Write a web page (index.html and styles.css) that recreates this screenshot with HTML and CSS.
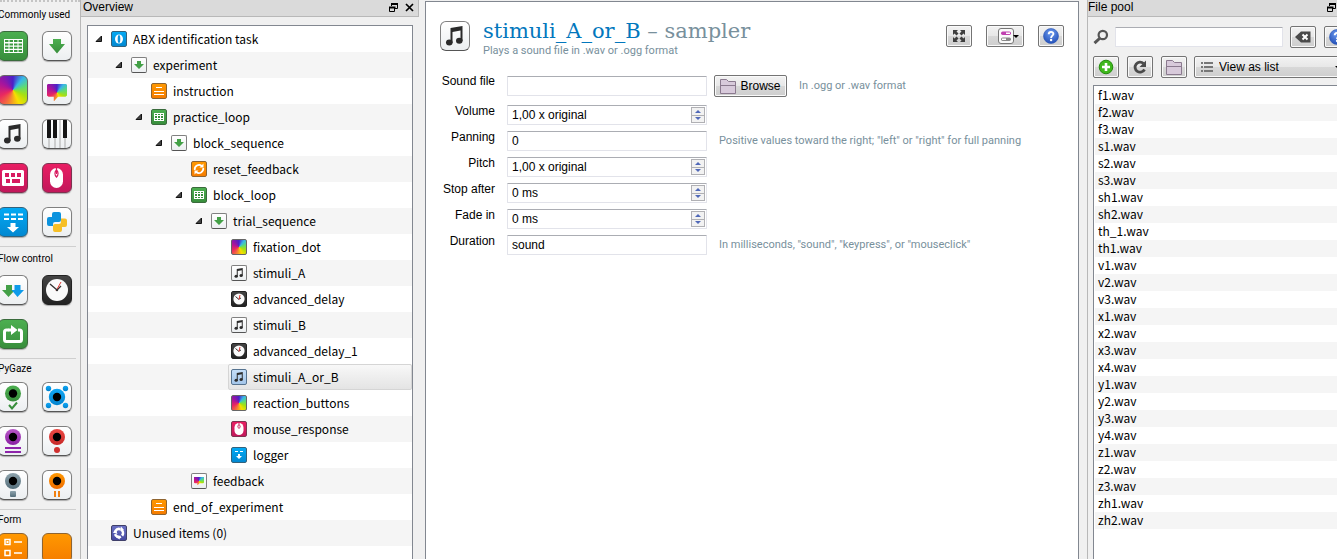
FILE: index.html
```html
<!DOCTYPE html>
<html lang="en">
<head>
<meta charset="utf-8">
<title>ABX identification task</title>
<link rel="stylesheet" href="styles.css">
</head>
<body>
<svg class="defs" aria-hidden="true">
  <defs>
    <linearGradient id="gGreen" x1="0" y1="0" x2="0" y2="1"><stop offset="0" stop-color="#4caf50"/><stop offset="1" stop-color="#388e3c"/></linearGradient>
    <linearGradient id="gBlue" x1="0" y1="0" x2="0" y2="1"><stop offset="0" stop-color="#12a8f5"/><stop offset="1" stop-color="#0283cf"/></linearGradient>
    <linearGradient id="gPurple" x1="0" y1="0" x2="0" y2="1"><stop offset="0" stop-color="#b858c8"/><stop offset="1" stop-color="#8a1fa4"/></linearGradient>
    <linearGradient id="gRed" x1="0" y1="0" x2="0" y2="1"><stop offset="0" stop-color="#ee4a45"/><stop offset="1" stop-color="#c62828"/></linearGradient>
    <linearGradient id="gSlate" x1="0" y1="0" x2="0" y2="1"><stop offset="0" stop-color="#8ea3ad"/><stop offset="1" stop-color="#546e7a"/></linearGradient>
    <linearGradient id="gOrange" x1="0" y1="0" x2="0" y2="1"><stop offset="0" stop-color="#ff9800"/><stop offset="1" stop-color="#ee6c00"/></linearGradient>
    <radialGradient id="gHelp" cx=".5" cy=".3" r=".7"><stop offset="0" stop-color="#6d9cf0"/><stop offset="1" stop-color="#2450b8"/></radialGradient>

    <symbol id="table" viewBox="0 0 28 28"><path fill="#fff" d="M5 7h19v14H5z"/><path stroke="#3c9a41" stroke-width="2" stroke-dasharray="3.5 1" d="M6 9h17M6 12.4h17M6 15.8h17M6 19h17"/></symbol>
    <symbol id="tableS" viewBox="0 0 14 14"><path fill="#fff" d="M2 3h10v8H2z"/><path fill="#388e3c" d="M3 4h2v1H3zM6 4h2v1H6zM9 4h2v1H9zM3 6h2v2H3zM6 6h2v2H6zM9 6h2v2H9zM3 9h2v1H3zM6 9h2v1H6zM9 9h2v1H9z"/></symbol>
    <symbol id="down" viewBox="0 0 28 28"><path fill="url(#gGreen)" d="M10 7h8v5h4l-8 9.500-8-9.500h4z"/></symbol>
    <symbol id="downS" viewBox="0 0 14 14"><path fill="#43a047" d="M5 3h4v3h3L7 11 2 6h3z"/></symbol>
    <symbol id="note" viewBox="0 0 28 28"><path fill="#2b2b2b" d="M9.500 6 21.500 4v15h-2V8.500L11.500 10v11h-2z"/><ellipse cx="8.300" cy="20.500" rx="3.300" ry="3" fill="#2b2b2b"/><ellipse cx="18.300" cy="18.800" rx="3.300" ry="3" fill="#2b2b2b"/></symbol>
    <symbol id="piano" viewBox="0 0 28 28"><path stroke="#aaa" d="M6 17v11M12 17v11M17 0v28M22 17v11"/><path fill="#151515" d="M4 0h4v18H4zM10 0h4v18h-4zM20 0h4v18h-4z"/></symbol>
    <symbol id="keyb" viewBox="0 0 28 28"><rect x="3" y="6" width="22" height="16" rx="1.500" fill="#fff"/><path fill="#d81b60" d="M6 9h4v4H6zM12 9h4v4h-4zM18 9h4v4h-4zM7 15h4v4H7zM13 15h8v4h-8z"/></symbol>
    <symbol id="mouse" viewBox="0 0 28 28"><rect x="7" y="4" width="13" height="20" rx="6.500" fill="#fff"/><path fill="none" stroke="#d81b60" stroke-width="1.300" d="M13.500 3v3m0 0c-2 2-2 5 0 7 2-2 2-5 0-7v4"/></symbol>
    <symbol id="mouseS" viewBox="0 0 14 14"><rect x="2.500" y="1" width="9" height="12" rx="4.500" fill="#fff"/><path fill="none" stroke="#c81858" d="M7 1v1.500m0 0C5.500 3.500 5.500 5 7 6.500 8.500 5 8.500 3.500 7 2.500"/></symbol>
    <symbol id="log" viewBox="0 0 28 28"><path stroke="#fff" stroke-width="2" stroke-dasharray="5 2" d="M5 6.500h19M5 11h19"/><path fill="#fff" d="M11.500 15h5v4H20l-6 5.500L8 19h3.500z"/></symbol>
    <symbol id="logS" viewBox="0 0 14 14"><path fill="#fff" d="M3 3h3v1H3zM8 3h3v1H8zM6 6h2v2h2l-3 3-3-3h2z"/></symbol>
    <symbol id="python" viewBox="0 0 28 28"><path fill="#0c93de" d="M11 4h5q2 0 2 2v6q0 2-2 2h-4q-2 0-2 2v2H6q-2 0-2-2v-5q0-2 2-2h3V6q0-2 2-2z"/><path fill="#f6bf26" d="M18 10.500h4q2 0 2 2V17q0 2-2 2h-3v3q0 2-2 2h-5q-2 0-2-2v-4q0-2 2-2h4q2 0 2-2z"/></symbol>
    <symbol id="twin" viewBox="0 0 28 28"><path fill="#43a047" d="M7 9h6v5h3l-6.500 7L3 14h4z"/><path fill="#0d9bea" d="M15.500 9h6v5H25l-6.500 7-6-7h3z"/></symbol>
    <symbol id="clock" viewBox="0 0 28 28"><circle cx="14" cy="14" r="11" fill="#fafafa"/><path stroke="#333" stroke-width="1.300" d="m14 14-7-6M14 14l4-4"/><path stroke="#e53935" d="m13 15 5-9"/><circle cx="14" cy="14" r="1.200" fill="#333"/></symbol>
    <symbol id="clockS" viewBox="0 0 14 14"><circle cx="7" cy="7" r="5.600" fill="#fafafa"/><path stroke="#333" d="m7 7.500-3.500-3M7 7l2-1"/><path stroke="#e53935" d="M7 7.500 8 3"/></symbol>
    <symbol id="repeat" viewBox="0 0 28 28"><path fill="none" stroke="#fff" stroke-width="3" d="M9.500 10H7.500Q5.500 10 5.500 12v7.500q0 2 2 2h13q2 0 2-2V12q0-2-2-2H19"/><path fill="#fff" d="M9 8.500h3V5l6.500 5-6.500 5v-3.500H9z"/></symbol>
    <symbol id="eyeGreen" viewBox="0 0 28 28"><circle cx="14" cy="10.500" r="8" fill="url(#gGreen)"/><circle cx="14" cy="10.500" r="4.200"/><path fill="none" stroke="#388e3c" stroke-width="2" d="m10 22 3 3.500 5-6"/></symbol>
    <symbol id="eyeBlue" viewBox="0 0 28 28"><g fill="url(#gBlue)"><circle cx="14" cy="14" r="8.200"/><circle cx="5.500" cy="5.500" r="2.700"/><circle cx="22.500" cy="5.500" r="2.700"/><circle cx="5.500" cy="22.500" r="2.700"/><circle cx="22.500" cy="22.500" r="2.700"/></g><circle cx="14" cy="14" r="4.200"/></symbol>
    <symbol id="eyePurple" viewBox="0 0 28 28"><circle cx="14" cy="10" r="8" fill="url(#gPurple)"/><circle cx="14" cy="10" r="4.200"/><path stroke="#8e24aa" stroke-width="2" d="M6 21h16M6 25h16"/></symbol>
    <symbol id="eyeRed" viewBox="0 0 28 28"><circle cx="14" cy="10" r="8" fill="url(#gRed)"/><circle cx="14" cy="10" r="4.200"/><circle cx="14" cy="23" r="3" fill="#cf302f"/></symbol>
    <symbol id="eyeSlate" viewBox="0 0 28 28"><circle cx="14" cy="10" r="8" fill="url(#gSlate)"/><circle cx="14" cy="10" r="4.200"/><rect x="11" y="20" width="6" height="6" rx="1" fill="url(#gSlate)"/></symbol>
    <symbol id="eyeOrange" viewBox="0 0 28 28"><circle cx="14" cy="10" r="8" fill="url(#gOrange)"/><circle cx="14" cy="10" r="4.200"/><path fill="#f08010" d="M11 20h2v6h-2zM15 20h2v6h-2z"/></symbol>
    <symbol id="formList" viewBox="0 0 28 28"><path fill="none" stroke="#fff" stroke-width="1.500" d="M6 5.500h5v5H6zM15 8h8M6 16.500h5v5H6zM15 19h8"/><path fill="#fff" d="M7.500 7h2v2h-2z"/></symbol>
    <symbol id="lines" viewBox="0 0 14 14"><path fill="#fff" d="M4 3h6v1H4zM2 7h10v1H2zM2 10h10v1H2z"/></symbol>
    <symbol id="reset" viewBox="0 0 14 14"><path fill="none" stroke="#fff" stroke-width="1.800" d="M2.800 8a4.300 4.300 0 0 1 7-4M11.200 6a4.300 4.300 0 0 1-7 4"/><path fill="#fff" d="M11.500 1.500v4h-4zM2.500 12.500v-4h4z"/></symbol>
    <symbol id="zero" viewBox="0 0 14 14"><ellipse cx="7" cy="7" rx="4" ry="4.600" fill="#fff"/><ellipse cx="7" cy="7" rx="1.300" ry="4" fill="#0d93dc"/></symbol>
    <symbol id="recycle" viewBox="0 0 14 14"><circle cx="7" cy="7" r="4" fill="none" stroke="#fff" stroke-width="2.600" stroke-dasharray="6.900 1.477" transform="rotate(-60 7 7)"/><path fill="#fff" d="m9 .5 3 3.500-4 .5zM.8 6.500 4 4l1.500 4zM7 9.500l1 4-4-2z"/></symbol>

    <symbol id="arrow" viewBox="0 0 8 8"><path fill="#444" stroke="#111" d="M6.500 1v5.500H1z"/></symbol>
    <symbol id="restore" viewBox="0 0 9 9"><path fill="none" stroke="#000" d="M2.500 3V.5h6v5H6"/><path stroke="#000" stroke-width="2" d="M2 1h7M0 4.500h6.500"/><path fill="none" stroke="#000" d="M.5 4v4.500h5V4"/></symbol>
    <symbol id="close" viewBox="0 0 9 9"><path stroke="#000" stroke-width="1.700" d="m1 1 7 7M8 1 1 8"/></symbol>
    <symbol id="folder" viewBox="0 0 16 16"><path fill="#d8cadb" stroke="#8b7a8f" d="M.5 15.500V1.500h6l2 2h7v12zM.5 7.500h15"/></symbol>
    <symbol id="expand" viewBox="0 0 16 16"><path fill="#3f3f3f" d="M2 2h5L5.500 3.500l2 2-2 2-2-2L2 7zM14 2v5l-1.500-1.500-2 2-2-2 2-2L9 2zM2 14V9l1.500 1.500 2-2 2 2-2 2L7 14zM14 14H9l1.500-1.500-2-2 2-2 2 2L14 9z"/></symbol>
    <symbol id="toggles" viewBox="0 0 16 16"><rect x=".5" y=".5" width="15" height="15" rx="2.500" fill="#fafafa" stroke="#777"/><rect x="3" y="3.500" width="10" height="3.500" rx="1.700" fill="#c040b0"/><rect x="8" y="4.500" width="4" height="1.500" fill="#fff"/><rect x="3" y="9.500" width="10" height="3.500" rx="1.700" fill="#888"/><rect x="4" y="10.500" width="4" height="1.500" fill="#fff"/></symbol>
    <symbol id="help" viewBox="0 0 16 16"><circle cx="8" cy="8" r="7.500" fill="url(#gHelp)" stroke="#2a55b5" stroke-width=".6"/><path fill="none" stroke="#fff" stroke-width="1.900" d="M5.700 6.300C5.700 3 10.500 3.200 10.400 6 10.300 7.600 8.100 7.800 8.100 10"/><circle cx="8.100" cy="12" r="1.200" fill="#fff"/></symbol>
    <symbol id="search" viewBox="0 0 16 16"><circle cx="9.800" cy="6" r="4.200" fill="none" stroke="#555" stroke-width="2.200"/><path stroke="#555" stroke-width="3" d="m6.500 9.500-5 4.700"/></symbol>
    <symbol id="erase" viewBox="0 0 16 16"><path fill="#4a4a4a" d="m0 8 6-5.500h9.500v11H6z"/><path stroke="#fff" stroke-width="2" d="m7.500 5.500 5 5M12.500 5.500l-5 5"/></symbol>
    <symbol id="plus" viewBox="0 0 16 16"><circle cx="8" cy="8" r="6.800" fill="#3fb81c" stroke="#238a0c"/><path stroke="#fff" stroke-width="2.600" d="M8 4v8M4 8h8"/></symbol>
    <symbol id="refresh" viewBox="0 0 16 16"><path fill="none" stroke="#4a4a4a" stroke-width="2.800" d="M12.500 10.500a5 5 0 1 1-1-6"/><path fill="#4a4a4a" d="M14 1.500V8H7.500z"/></symbol>
    <symbol id="list" viewBox="0 0 12 12"><path stroke="#777" stroke-width="2" d="M0 2h2M0 6h2M0 10h2M3 2h9M3 6h9M3 10h9"/></symbol>
  </defs>
</svg>

<div class="app">
  <aside class="toolbox">
    <section class="group">
      <h2>Commonly used</h2>
      <div class="tools">
        <button class="tile green" aria-label="loop"><svg><use href="#table"/></svg></button>
        <button class="tile" aria-label="sequence"><svg><use href="#down"/></svg></button>
        <button class="tile rainbow" aria-label="sketchpad"></button>
        <button class="tile" aria-label="feedback"><span class="bubble"></span></button>
        <button class="tile" aria-label="sampler"><svg><use href="#note"/></svg></button>
        <button class="tile" aria-label="synth"><svg><use href="#piano"/></svg></button>
        <button class="tile pink" aria-label="keyboard_response"><svg><use href="#keyb"/></svg></button>
        <button class="tile pink" aria-label="mouse_response"><svg><use href="#mouse"/></svg></button>
        <button class="tile blue" aria-label="logger"><svg><use href="#log"/></svg></button>
        <button class="tile" aria-label="inline_script"><svg><use href="#python"/></svg></button>
      </div>
    </section>
    <section class="group flow">
      <h2>Flow control</h2>
      <div class="tools">
        <button class="tile" aria-label="coroutines"><svg><use href="#twin"/></svg></button>
        <button class="tile dark" aria-label="advanced_delay"><svg><use href="#clock"/></svg></button>
        <button class="tile green" aria-label="repeat_cycle"><svg><use href="#repeat"/></svg></button>
      </div>
    </section>
    <section class="group">
      <h2>PyGaze</h2>
      <div class="tools">
        <button class="tile" aria-label="pygaze_init"><svg><use href="#eyeGreen"/></svg></button>
        <button class="tile" aria-label="pygaze_drift_correct"><svg><use href="#eyeBlue"/></svg></button>
        <button class="tile" aria-label="pygaze_log"><svg><use href="#eyePurple"/></svg></button>
        <button class="tile" aria-label="pygaze_start_recording"><svg><use href="#eyeRed"/></svg></button>
        <button class="tile" aria-label="pygaze_stop_recording"><svg><use href="#eyeSlate"/></svg></button>
        <button class="tile" aria-label="pygaze_wait"><svg><use href="#eyeOrange"/></svg></button>
      </div>
    </section>
    <section class="group">
      <h2>Form</h2>
      <div class="tools">
        <button class="tile orange" aria-label="form_multiple_choice"><svg><use href="#formList"/></svg></button>
        <button class="tile orange" aria-label="form_base"></button>
      </div>
    </section>
  </aside>

  <section class="dock overview">
    <header class="dock-head"><h2>Overview</h2>
      <button aria-label="Float overview"><svg><use href="#restore"/></svg></button>
      <button aria-label="Close overview"><svg><use href="#close"/></svg></button>
    </header>
    <div class="dock-body">
      <ul class="tree">
        <li class="d0"><svg class="arrow"><use href="#arrow"/></svg><span class="tile blue"><svg><use href="#zero"/></svg></span>ABX identification task</li>
        <li class="d1"><svg class="arrow"><use href="#arrow"/></svg><span class="tile"><svg><use href="#downS"/></svg></span>experiment</li>
        <li class="d2"><span class="arrow"></span><span class="tile orange"><svg><use href="#lines"/></svg></span>instruction</li>
        <li class="d2"><svg class="arrow"><use href="#arrow"/></svg><span class="tile green"><svg><use href="#tableS"/></svg></span>practice_loop</li>
        <li class="d3"><svg class="arrow"><use href="#arrow"/></svg><span class="tile"><svg><use href="#downS"/></svg></span>block_sequence</li>
        <li class="d4"><span class="arrow"></span><span class="tile orange"><svg><use href="#reset"/></svg></span>reset_feedback</li>
        <li class="d4"><svg class="arrow"><use href="#arrow"/></svg><span class="tile green"><svg><use href="#tableS"/></svg></span>block_loop</li>
        <li class="d5"><svg class="arrow"><use href="#arrow"/></svg><span class="tile"><svg><use href="#downS"/></svg></span>trial_sequence</li>
        <li class="d6"><span class="arrow"></span><span class="tile rainbow"></span>fixation_dot</li>
        <li class="d6"><span class="arrow"></span><span class="tile"><svg><use href="#note"/></svg></span>stimuli_A</li>
        <li class="d6"><span class="arrow"></span><span class="tile dark"><svg><use href="#clockS"/></svg></span>advanced_delay</li>
        <li class="d6"><span class="arrow"></span><span class="tile"><svg><use href="#note"/></svg></span>stimuli_B</li>
        <li class="d6"><span class="arrow"></span><span class="tile dark"><svg><use href="#clockS"/></svg></span>advanced_delay_1</li>
        <li class="d6"><span class="arrow"></span><span class="current"><span class="tile picked"><svg><use href="#note"/></svg></span>stimuli_A_or_B</span></li>
        <li class="d6"><span class="arrow"></span><span class="tile rainbow"></span>reaction_buttons</li>
        <li class="d6"><span class="arrow"></span><span class="tile pink"><svg><use href="#mouseS"/></svg></span>mouse_response</li>
        <li class="d6"><span class="arrow"></span><span class="tile blue"><svg><use href="#logS"/></svg></span>logger</li>
        <li class="d4"><span class="arrow"></span><span class="tile"><span class="bubble"></span></span>feedback</li>
        <li class="d2"><span class="arrow"></span><span class="tile orange"><svg><use href="#lines"/></svg></span>end_of_experiment</li>
        <li class="d0"><span class="arrow"></span><span class="tile indigo"><svg><use href="#recycle"/></svg></span>Unused items (0)</li>
      </ul>
    </div>
  </section>

  <main class="editor">
    <header class="item-head">
      <span class="tile"><svg><use href="#note"/></svg></span>
      <div class="item-title">
        <h1><b>stimuli_A_or_B</b> – sampler</h1>
        <p>Plays a sound file in .wav or .ogg format</p>
      </div>
      <div class="item-actions">
        <button class="btn" aria-label="Maximize"><svg><use href="#expand"/></svg></button>
        <button class="btn wide" aria-label="View controls"><svg><use href="#toggles"/></svg><i class="caret"></i></button>
        <button class="btn" aria-label="Help"><svg><use href="#help"/></svg></button>
      </div>
    </header>
    <form class="fields">
      <label for="file">Sound file</label>
      <div class="field first"><input class="box" id="file" type="text"><button class="btn browse" type="button"><svg><use href="#folder"/></svg>Browse</button><span class="hint">In .ogg or .wav format</span></div>
      <label for="volume">Volume</label>
      <div class="field"><div class="box spin"><input id="volume" type="text" value="1,00 x original"><span class="steps"><button type="button" class="up" aria-label="Increase volume"></button><button type="button" class="dn" aria-label="Decrease volume"></button></span></div></div>
      <label for="panning">Panning</label>
      <div class="field"><input class="box" id="panning" type="text" value="0"><span class="hint">Positive values toward the right; "left" or "right" for full panning</span></div>
      <label for="pitch">Pitch</label>
      <div class="field"><div class="box spin"><input id="pitch" type="text" value="1,00 x original"><span class="steps"><button type="button" class="up" aria-label="Increase pitch"></button><button type="button" class="dn" aria-label="Decrease pitch"></button></span></div></div>
      <label for="stop">Stop after</label>
      <div class="field"><div class="box spin"><input id="stop" type="text" value="0 ms"><span class="steps"><button type="button" class="up" aria-label="Increase stop after"></button><button type="button" class="dn" aria-label="Decrease stop after"></button></span></div></div>
      <label for="fade">Fade in</label>
      <div class="field"><div class="box spin"><input id="fade" type="text" value="0 ms"><span class="steps"><button type="button" class="up" aria-label="Increase fade in"></button><button type="button" class="dn" aria-label="Decrease fade in"></button></span></div></div>
      <label for="duration">Duration</label>
      <div class="field"><input class="box" id="duration" type="text" value="sound"><span class="hint">In milliseconds, "sound", "keypress", or "mouseclick"</span></div>
    </form>
  </main>

  <section class="dock pool">
    <header class="dock-head"><h2>File pool</h2>
      <button aria-label="Float file pool"><svg><use href="#restore"/></svg></button>
      <button aria-label="Close file pool"><svg><use href="#close"/></svg></button>
    </header>
    <div class="dock-body">
      <div class="bar">
        <label class="find" for="find" aria-label="Search files"><svg><use href="#search"/></svg></label>
        <input class="box" id="find" type="text">
        <button class="btn" aria-label="Clear search"><svg><use href="#erase"/></svg></button>
        <button class="btn" aria-label="File pool help"><svg><use href="#help"/></svg></button>
      </div>
      <div class="bar">
        <button class="btn" aria-label="Add file"><svg><use href="#plus"/></svg></button>
        <button class="btn" aria-label="Refresh"><svg><use href="#refresh"/></svg></button>
        <button class="btn" aria-label="Open folder"><svg><use href="#folder"/></svg></button>
        <div class="btn combo"><svg><use href="#list"/></svg><select aria-label="View mode"><option>View as list</option><option>View as icons</option></select><i class="caret"></i></div>
      </div>
      <ul class="files">
        <li>f1.wav</li><li>f2.wav</li><li>f3.wav</li>
        <li>s1.wav</li><li>s2.wav</li><li>s3.wav</li>
        <li>sh1.wav</li><li>sh2.wav</li>
        <li>th_1.wav</li><li>th1.wav</li>
        <li>v1.wav</li><li>v2.wav</li><li>v3.wav</li>
        <li>x1.wav</li><li>x2.wav</li><li>x3.wav</li><li>x4.wav</li>
        <li>y1.wav</li><li>y2.wav</li><li>y3.wav</li><li>y4.wav</li>
        <li>z1.wav</li><li>z2.wav</li><li>z3.wav</li>
        <li>zh1.wav</li><li>zh2.wav</li>
      </ul>
    </div>
  </section>
</div>
</body>
</html>
```
FILE: styles.css
```css
* { box-sizing: border-box; margin: 0; padding: 0; }
body {
  background: #f0f0f0;
  color: #000;
  font: 12px/16px "Liberation Sans", sans-serif;
  overflow: hidden;
}
button, input, select { font: inherit; color: inherit; border: 0; background: none; }
ul { list-style: none; }
svg { display: block; }
.defs { position: absolute; width: 0; height: 0; }

.app {
  display: grid;
  grid-template-columns: 80px 339px 1fr 250px;
  height: 100vh;
}
.app > * { min-width: 0; overflow: hidden; }

/* Item toolbox */
.toolbox { border-top: 2px dotted #c4c4c4; }
.group { padding-bottom: 9px; margin-right: 4px; }
.group + .group { border-top: 1px solid #cfcfcf; }
.group h2 {
  font: 10px/16px Roboto, sans-serif;
  margin-left: -2px;
  padding: 2px 0 5px;
  white-space: nowrap;
}
.group:first-child h2 { padding: 5px 0 8px; }
.flow h2 { padding: 4px 0 8px; }
.tools {
  display: grid;
  grid-template-columns: 30px 30px;
  gap: 14px;
  margin-left: -2px;
}
.tile {
  display: block;
  flex: none;
  width: 30px;
  height: 30px;
  border: 1px solid #808080;
  border-bottom-color: #555;
  border-radius: 6px;
  background: linear-gradient(#fff, #eceff1);
  overflow: hidden;
}
.tools .tile { box-shadow: 0 1px 1px #aaa; }
.tile svg { width: 100%; height: 100%; }
.green { background: linear-gradient(#4caf50, #388e3c); border-color: #3a6b3c; }
.blue { background: linear-gradient(#03a9f4, #0288d1); border-color: #33627c; }
.pink { background: linear-gradient(#e91e63, #c2185b); border-color: #7d3350; }
.orange { background: linear-gradient(#ff9800, #f57c00); border-color: #8f6430; }
.dark { background: linear-gradient(#444, #222); border-color: #222; }
.indigo { background: linear-gradient(#6a70c4, #4548a0); border-color: #40406a; }
.picked { background: linear-gradient(#c4def8, #a4c6ea); border-color: #567390; }
.rainbow, .bubble {
  background: conic-gradient(#4a20c8, #38b8e8 40deg, #60dc70 75deg, #a8e010 115deg, #f8e000 155deg, #f4703c 205deg, #ea2860 245deg, #a8149c 300deg, #4a20c8);
}
.rainbow { border-color: #666; }
.bubble {
  display: block;
  width: 72%;
  height: 64%;
  margin: 18% auto 0;
  clip-path: polygon(0 8%, 8% 0, 92% 0, 100% 8%, 100% 66%, 92% 74%, 55% 74%, 34% 100%, 34% 74%, 8% 74%, 0 66%);
}

/* Dock panels */
.dock {
  display: flex;
  flex-direction: column;
  border-left: 1px solid #b8b8b8;
}
.dock-head {
  display: flex;
  align-items: center;
  flex: none;
  height: 17px;
  padding: 0 4px 2px 2px;
  background: #dadada;
  border-bottom: 1px solid #b8b8b8;
}
.overview .dock-head { border-right: 1px solid #b8b8b8; }
.dock-head h2 { flex: 1; font: 12px/14px "Liberation Sans", sans-serif; }
.dock-head button { margin-left: 7px; }
.dock-head svg { width: 9px; height: 9px; }
.dock-body { display: flex; flex-direction: column; flex: 1; padding: 8px 6px 0; }
.tree, .files {
  flex: 1;
  background: #fff;
  border: 1px solid #828790;
  border-bottom: 0;
  font: 12px/16px "Noto Sans CJK KR", "Noto Sans", sans-serif;
  white-space: nowrap;
}
.tree li { display: flex; align-items: center; height: 26px; }
.tree li:nth-child(even), .files li:nth-child(even) { background: #f5f5f5; }
.tree .tile { width: 16px; height: 16px; border-radius: 2px; margin-right: 6px; }
.arrow { flex: none; width: 8px; height: 8px; margin: 0 8px 0 7px; }
.d1 { padding-left: 20px; }
.d2 { padding-left: 40px; }
.d3 { padding-left: 60px; }
.d4 { padding-left: 80px; }
.d5 { padding-left: 100px; }
.d6 { padding-left: 120px; }
.current {
  display: flex;
  align-items: center;
  flex: 1;
  height: 26px;
  margin-left: -3px;
  padding-left: 2px;
  border: 1px solid #d5d5d5;
  border-radius: 2px;
  background: linear-gradient(#f8f8f8, #e4e4e4);
}

/* Item editor */
.editor {
  margin: 1px 8px 0 6px;
  padding: 18px 14px 0;
  background: #fff;
  border: 1px solid #828790;
  border-bottom: 0;
}
.item-head { display: flex; align-items: flex-start; height: 55px; }
.item-head > .tile { margin: 1px 13px 0 0; }
.item-title { flex: 1; white-space: nowrap; }
.item-title h1 { font: 21px/22px "DejaVu Serif", serif; color: #78909c; }
.item-title b { font-weight: 400; color: #0277bd; }
.item-title p, .hint { font: 11px/18px Roboto, sans-serif; color: #78909c; white-space: nowrap; }
.item-actions { display: flex; gap: 14px; margin-top: 5px; }
.btn {
  display: flex;
  align-items: center;
  justify-content: center;
  flex: none;
  width: 26px;
  height: 22px;
  border: 1px solid #747474;
  border-radius: 2px;
  box-shadow: inset 0 0 0 1px #fafafa;
  background: linear-gradient(#f2f2f2, #e8e8e8 48%, #d8d8d8 50%, #cecece);
}
.btn svg { flex: none; width: 16px; height: 16px; }
.wide { width: 38px; padding-left: 6px; }
.caret { flex: none; border: 3px solid transparent; border-top-color: #000; border-bottom: 0; }
.wide .caret { margin-left: -1px; }
.fields {
  display: grid;
  grid-template-columns: 55px 1fr;
  gap: 6px 12px;
}
.fields label { text-align: right; line-height: 12px; white-space: nowrap; }
.field { display: flex; align-items: center; }
.first { height: 24px; padding-bottom: 2px; }
.box {
  flex: none;
  width: 200px;
  height: 20px;
  padding: 0 4px;
  background: #fff;
  border: 1px solid #e2e3ea;
  border-top-color: #abadb3;
  border-radius: 1px;
}
.spin { display: flex; align-items: center; padding-right: 1px; }
.spin input { flex: 1; min-width: 0; }
.steps { display: grid; width: 14px; height: 16px; border: 1px solid #b0b0b4; background: #f2f2f2; }
.steps button { display: flex; align-items: center; justify-content: center; }
.steps .dn { border-top: 1px solid #b0b0b4; }
.steps button::after { content: ""; border: 3px solid transparent; }
.steps .up::after { border-top: 0; border-bottom-color: #5068b8; }
.steps .dn::after { border-bottom: 0; border-top-color: #5068b8; }
.hint { margin-left: 12px; }
.browse { width: 73px; gap: 4px; margin-left: 7px; }

/* File pool: wider than its column, clipped at the window edge */
.pool .dock-head, .pool .dock-body { width: 268px; }
.pool .dock-head { padding-left: 0; }
.pool .dock-body { padding: 9px 6px 0 5px; }
.bar { display: flex; align-items: center; gap: 8px; height: 22px; margin-bottom: 8px; }
.bar .box { flex: 1; width: auto; min-width: 0; margin: 0 -1px 0 -2px; }
.bar + .bar { margin-bottom: 7px; }
.find svg { width: 16px; height: 16px; }
.combo { flex: 1; width: auto; margin-left: -1px; padding: 0 8px 0 6px; }
.combo svg { width: 12px; height: 12px; }
.combo select { flex: 1; appearance: none; padding-left: 6px; }
.files { padding: 1px; }
.files li { padding-left: 3px; height: 17px; }
```
